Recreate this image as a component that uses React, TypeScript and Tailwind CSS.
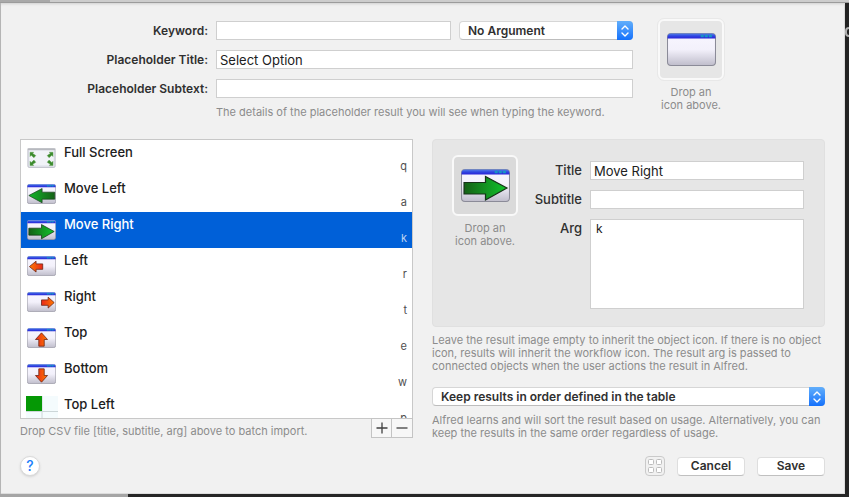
import { useState } from "react";

type Kind =
  | "blank"
  | "full"
  | "bigLeft"
  | "bigRight"
  | "left"
  | "right"
  | "up"
  | "down"
  | "topLeft";

const results: { title: string; arg: string; kind: Kind }[] = [
  { title: "Full Screen", arg: "q", kind: "full" },
  { title: "Move Left", arg: "a", kind: "bigLeft" },
  { title: "Move Right", arg: "k", kind: "bigRight" },
  { title: "Left", arg: "r", kind: "left" },
  { title: "Right", arg: "t", kind: "right" },
  { title: "Top", arg: "e", kind: "up" },
  { title: "Bottom", arg: "w", kind: "down" },
  { title: "Top Left", arg: "p", kind: "topLeft" },
];

/* Gradients shared by every window icon */
function IconDefs() {
  return (
    <svg width="0" height="0" className="absolute" aria-hidden="true">
      <defs>
        <linearGradient id="pane" x1="0" y1="0" x2="0" y2="1">
          <stop offset="0" stopColor="#f8f6ff" />
          <stop offset="0.5" stopColor="#f3f1fb" />
          <stop offset="1" stopColor="#bfbdcb" />
        </linearGradient>
        <linearGradient id="bar" x1="0" y1="0" x2="0" y2="1">
          <stop offset="0" stopColor="#5580ea" />
          <stop offset="0.5" stopColor="#2f46e0" />
          <stop offset="1" stopColor="#2a22d8" />
        </linearGradient>
        <linearGradient id="green" x1="0" y1="0" x2="1" y2="0">
          <stop offset="0" stopColor="#156016" />
          <stop offset="1" stopColor="#10c52c" />
        </linearGradient>
        <linearGradient id="greenBack" x1="0" y1="0" x2="1" y2="0">
          <stop offset="0" stopColor="#12b52a" />
          <stop offset="1" stopColor="#156016" />
        </linearGradient>
        <linearGradient id="red" x1="0" y1="0" x2="1" y2="0">
          <stop offset="0" stopColor="#ff7a00" />
          <stop offset="1" stopColor="#e8281a" />
        </linearGradient>
        <linearGradient id="redBack" x1="0" y1="0" x2="1" y2="0">
          <stop offset="0" stopColor="#e8281a" />
          <stop offset="1" stopColor="#ff7a00" />
        </linearGradient>
      </defs>
    </svg>
  );
}

function WindowIcon({ kind, className }: { kind: Kind; className: string }) {
  if (kind === "topLeft") {
    return (
      <svg viewBox="0 0 32 32" className={className} aria-hidden="true">
        <rect width="32" height="32" fill="#f4fbfd" />
        <path d="M16 0v32M0 15.5h32" stroke="#ccd6d8" strokeWidth="1" />
        <rect width="16" height="15" fill="#059805" />
      </svg>
    );
  }
  if (kind === "full") {
    const corner = "M5 5h6l-1.500 2 5 3.500-3 3.500-4.500-4-2 2z";
    return (
      <svg viewBox="0 0 48 33" preserveAspectRatio="none" className={className} aria-hidden="true">
        <rect x="1.500" y="1.500" width="45" height="30.500" rx="2" fill="#e3e5ee" stroke="#b9bcc5" strokeWidth="1.500" />
        <rect x="4" y="4.500" width="40" height="24" fill="#f1f3f8" />
        <path d="M1 2h46" stroke="#b7b9bf" strokeWidth="3" />
        <g fill="#3a8a2c" stroke="#5f9f50" strokeWidth="0.800">
          <path d={corner} transform="translate(0 2)" />
          <path d={corner} transform="translate(48 2) scale(-1 1)" />
          <path d={corner} transform="translate(0 34) scale(1 -1)" />
          <path d={corner} transform="translate(48 34) scale(-1 -1)" />
        </g>
      </svg>
    );
  }
  return (
    <svg viewBox="0 0 48 33" preserveAspectRatio="none" className={className} aria-hidden="true">
      <rect x="0.500" y="0.500" width="47" height="32" rx="3.500" fill="url(#pane)" stroke="#8b8b98" />
      <path d="M0.500 5.500V4a3.500 3.500 0 0 1 3.500-3.500h40a3.500 3.500 0 0 1 3.500 3.500v1.500z" fill="url(#bar)" />
      <path d="M33 3h3m1 0h3m1 0h3" stroke="#1694c4" strokeWidth="2.500" />
      {kind === "bigRight" && (
        <path d="M3 13.500h21V7.500l21 11.500-21 12V25H3z" fill="url(#green)" stroke="#163318" strokeWidth="1.200" />
      )}
      {kind === "bigLeft" && (
        <path d="M46 13.500H25V7.500L3 19l22 12v-6h21z" fill="url(#greenBack)" stroke="#1c421e" strokeWidth="1.200" />
      )}
      {kind === "left" && (
        <path d="M26 13h-11V8.500L4 17.500l11 9V22h11z" fill="url(#red)" stroke="#6b2413" strokeWidth="1.300" />
      )}
      {kind === "right" && (
        <path d="M24 13h11V8.500l10 9-10 9V22H24z" fill="url(#redBack)" stroke="#6b2413" strokeWidth="1.300" />
      )}
      {kind === "up" && (
        <path d="M19.500 30V19h-5.500L24 8l10 11h-5.500v11z" fill="url(#redBack)" stroke="#6b2413" strokeWidth="1.300" />
      )}
      {kind === "down" && (
        <path d="M19.500 8v11h-5.500L24 30l10-11h-5.500V8z" fill="url(#redBack)" stroke="#6b2413" strokeWidth="1.300" />
      )}
    </svg>
  );
}

function Popup({ label, value, className }: { label: string; value: string; className: string }) {
  return (
    <div className={`relative ${className}`}>
      <select
        aria-label={label}
        className="block h-[19px] w-full appearance-none rounded border border-[#d6d6d6] border-b-[#bdbdbd] bg-white pr-6 pl-2 text-[12px] leading-4 font-semibold text-[#303030] outline-none"
      >
        <option>{value}</option>
      </select>
      <span className="pointer-events-none absolute inset-y-0 right-0 flex w-4 items-center justify-center rounded-r bg-linear-to-b from-[#61aefb] to-[#1270fb]">
        <svg viewBox="0 0 10 14" className="h-3.5 w-2.5" fill="none" stroke="white" strokeWidth="1.400" strokeLinecap="round" strokeLinejoin="round" aria-hidden="true">
          <path d="M2 5l3-3 3 3M2 9l3 3 3-3" />
        </svg>
      </span>
    </div>
  );
}

function IconWell({ kind, tone }: { kind: Kind; tone: string }) {
  return (
    <div className="flex w-[66px] shrink-0 flex-col items-center">
      <div className={`flex h-[61px] w-full items-center justify-center rounded-md border-2 border-[#f9f9f9] ${tone}`}>
        <WindowIcon kind={kind} className="h-[33px] w-[49px]" />
      </div>
      <p className="mt-1.5 text-center text-[11px] leading-[13px] whitespace-nowrap text-[#8c8c8c]">
        Drop an
        <br />
        icon above.
      </p>
    </div>
  );
}

const field =
  "block h-[19px] w-full min-w-0 border border-[#cfcfcf] bg-white px-[3px] text-[13px] leading-4 text-[#202020] outline-none";
const formLabel = "text-right text-[12px] leading-[19px] font-semibold whitespace-nowrap text-[#303030]";
const panelLabel = "text-right text-[13px] leading-[19px] font-medium whitespace-nowrap text-[#303030]";
const hint = "text-[11px] leading-[13px] text-[#8c8c8c]";
const push =
  "h-[19px] w-[68px] rounded border border-[#dedede] border-b-[#c0c0c0] bg-white text-center text-[12px] leading-4 font-semibold text-[#303030]";

export default function App() {
  const [selected, setSelected] = useState(2);
  const current = results[selected];

  return (
    <div className="flex min-h-screen flex-col bg-[#262626] font-['Inter','Liberation_Sans',sans-serif]">
      <IconDefs />
      <div className="flex h-[3px] border-b border-[#9c9c9c] bg-[#cdcdcd]">
        <div className="w-[50px] bg-[#a9a9a9]" />
      </div>

      <div className="flex flex-1">
        <div className="w-px bg-[#b5b5b5]" />
        <main className="flex min-w-0 flex-1 flex-col border-r border-b border-[#dcdcdc] bg-[#f1f1f1] px-[19px] pt-4 pb-[17px] shadow-[inset_0_3px_3px_-2px_#d0d0d0]">
          <section className="flex gap-[25px] pr-[101px]">
            <div className="flex-1 pt-0.5">
              <div className="grid grid-cols-[188px_1fr] gap-x-2 gap-y-2.5">
                <label htmlFor="keyword" className={formLabel}>Keyword:</label>
                <div className="flex gap-2">
                  <input id="keyword" className={`${field} flex-1`} />
                  <Popup label="Argument" value="No Argument" className="w-[174px]" />
                </div>
                <label htmlFor="ptitle" className={formLabel}>Placeholder Title:</label>
                <input id="ptitle" defaultValue="Select Option" className={field} />
                <label htmlFor="psub" className={formLabel}>Placeholder Subtext:</label>
                <input id="psub" className={field} />
              </div>
              <p className={`${hint} mt-2 pl-[196px] whitespace-nowrap`}>
                The details of the placeholder result you will see when typing the keyword.
              </p>
            </div>
            <IconWell kind="blank" tone="bg-[#e6e6e6] outline outline-[#e8e8e8]" />
          </section>

          <section className="mt-5 grid grid-cols-[393px_1fr] gap-x-[19px]">
            <div>
              <div className="h-[280px] overflow-hidden border border-[#c8c8c8] bg-white">
                <table className="w-full border-collapse">
                  <tbody>
                    {results.map((r, i) => (
                      <tr
                        key={r.title}
                        onClick={() => setSelected(i)}
                        className={`h-9 ${i === selected ? "bg-[#0060d8] text-white" : "text-[#202020]"}`}
                      >
                        <td className="w-[43px] p-0 align-top">
                          {r.kind === "topLeft" ? (
                            <WindowIcon kind={r.kind} className="mt-1 ml-[5px] size-8" />
                          ) : (
                            <WindowIcon kind={r.kind} className="mt-2 ml-1.5 h-5 w-[29px]" />
                          )}
                        </td>
                        <td className="p-0 pt-1 align-top text-[13px] leading-4 font-medium">{r.title}</td>
                        <td
                          className={`p-0 pr-[5px] pb-[3px] text-right align-bottom text-[11px] leading-[13px] ${
                            i === selected ? "text-[#bdd3f2]" : "text-[#505050]"
                          }`}
                        >
                          {r.arg}
                        </td>
                      </tr>
                    ))}
                  </tbody>
                </table>
              </div>
              <div className="flex justify-between">
                <p className={`${hint} pt-1.5`}>Drop CSV file [title, subtitle, arg] above to batch import.</p>
                <div className="-mt-px flex h-5 divide-x divide-[#c4c4c4] border border-[#c4c4c4] bg-[#f7f7f7] text-[#404040]">
                  <button aria-label="Add result" className="flex w-5 items-center justify-center">
                    <svg viewBox="0 0 12 12" className="size-3" stroke="currentColor" strokeWidth="1.300" aria-hidden="true">
                      <path d="M0.500 6h11M6 0.500v11" />
                    </svg>
                  </button>
                  <button aria-label="Remove result" className="flex w-5 items-center justify-center">
                    <svg viewBox="0 0 12 12" className="size-3" stroke="currentColor" strokeWidth="1.300" aria-hidden="true">
                      <path d="M0.500 6h11" />
                    </svg>
                  </button>
                </div>
              </div>
            </div>

            <div className="min-w-0">
              <div className="flex gap-2 rounded border border-[#e0e0e0] bg-[#e6e6e6] pt-[15px] pr-5 pb-[17px] pl-[19px]">
                <IconWell kind={current.kind} tone="bg-[#dadada]" />
                <div className="grid flex-1 grid-cols-[56px_1fr] gap-x-2 gap-y-2.5 pt-1.5">
                  <label htmlFor="title" className={panelLabel}>Title</label>
                  <input id="title" key={current.title} defaultValue={current.title} className={field} />
                  <label htmlFor="subtitle" className={panelLabel}>Subtitle</label>
                  <input id="subtitle" className={field} />
                  <label htmlFor="arg" className={panelLabel}>Arg</label>
                  <textarea
                    id="arg"
                    key={current.arg}
                    defaultValue={current.arg}
                    className="block h-[90px] w-full resize-none border border-[#cfcfcf] bg-white px-[5px] py-px text-[12px] leading-4 text-[#202020] outline-none"
                  />
                </div>
              </div>
              <p className={`${hint} mt-[7px]`}>
                Leave the result image empty to inherit the object icon. If there is no object icon, results will
                inherit the workflow icon. The result arg is passed to connected objects when the user actions the
                result in Alfred.
              </p>
              <Popup label="Result order" value="Keep results in order defined in the table" className="mt-3.5" />
              <p className={`${hint} mt-2`}>
                Alfred learns and will sort the result based on usage. Alternatively, you can keep the results in the
                same order regardless of usage.
              </p>
            </div>
          </section>

          <footer className="mt-auto flex items-center gap-3">
            <button
              aria-label="Help"
              className="mr-auto flex size-5 items-center justify-center rounded-full border border-[#dadada] bg-white text-[14px] leading-4 font-medium text-[#1a7efa] shadow-sm"
            >
              ?
            </button>
            <button aria-label="Show grid" className="flex size-5 items-center justify-center rounded-sm border border-[#cacaca] text-[#bcbcbc]">
              <svg viewBox="0 0 14 14" className="size-3.5" fill="white" stroke="currentColor" aria-hidden="true">
                <rect x="0.500" y="0.500" width="5" height="5" rx="1" />
                <rect x="8.500" y="0.500" width="5" height="5" rx="1" />
                <rect x="0.500" y="8.500" width="5" height="5" rx="1" />
                <rect x="8.500" y="8.500" width="5" height="5" rx="1" />
              </svg>
            </button>
            <button className={push}>Cancel</button>
            <button className={push}>Save</button>
          </footer>
        </main>
        <div className="w-1 overflow-hidden bg-[#232323] pt-6">
          <div className="h-2.5 w-2 rounded-sm border-2 border-[#b0b0b0]" />
        </div>
      </div>
      <div className="flex h-[3px]">
        <div className="w-32 bg-[#a5a5a5]" />
      </div>
    </div>
  );
}
